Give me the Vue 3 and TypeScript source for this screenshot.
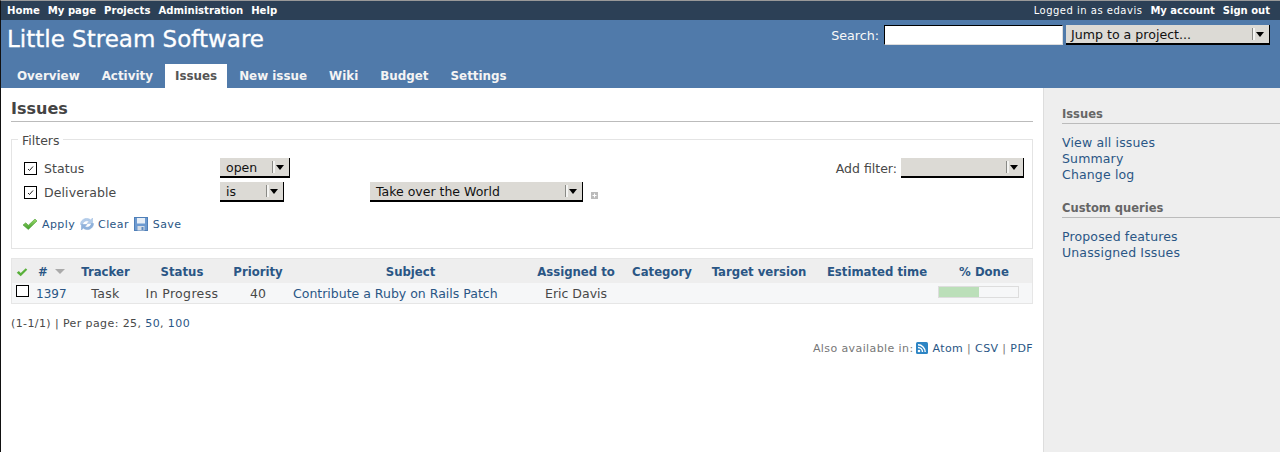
<script setup lang="ts">
const topLinks: string[] = ['Home', 'My page', 'Projects', 'Administration', 'Help']
const tabs: string[] = ['Overview', 'Activity', 'Issues', 'New issue', 'Wiki', 'Budget', 'Settings']
const columns: { label: string; cls: string }[] = [
  { label: 'Tracker', cls: 'c-tracker' },
  { label: 'Status', cls: 'c-status' },
  { label: 'Priority', cls: 'c-priority' },
  { label: 'Subject', cls: 'c-subject-h' },
  { label: 'Assigned to', cls: 'c-assigned' },
  { label: 'Category', cls: 'c-category' },
  { label: 'Target version', cls: 'c-target' },
  { label: 'Estimated time', cls: 'c-estimated' },
  { label: '% Done', cls: 'c-done-h' },
]
</script>

<template>
  <div class="page">
    <div class="top-menu">
      <nav class="top-left"><a v-for="l in topLinks" :key="l">{{ l }}</a></nav>
      <div class="top-right"><span class="logged">Logged in as edavis</span><a>My account</a><a>Sign out</a></div>
    </div>
    <header class="header">
      <div class="title-row">
        <h1>Little Stream Software</h1>
        <div class="quick">
          <label>Search:</label>
          <input class="search" type="text" />
          <div class="sel sel-jump"><span>Jump to a project...</span><i class="arrow"></i></div>
        </div>
      </div>
      <nav class="tabs">
        <a v-for="t in tabs" :key="t" :class="{ active: t === 'Issues' }">{{ t }}</a>
      </nav>
    </header>
    <div class="main">
      <div class="content">
        <h2>Issues</h2>
        <fieldset class="filters">
          <legend>Filters</legend>
          <div class="filter-body">
            <div class="filter-rows">
              <div class="frow">
                <span class="cb checked"><svg viewBox="0 0 9 9" width="9" height="9"><path d="M2 5 L3.500 6.500 L7 2.500" fill="none" stroke="#222" stroke-width="1"/></svg></span>
                <span class="flabel">Status</span>
                <div class="sel sel-open"><span>open</span><i class="arrow"></i></div>
              </div>
              <div class="frow">
                <span class="cb checked"><svg viewBox="0 0 9 9" width="9" height="9"><path d="M2 5 L3.500 6.500 L7 2.500" fill="none" stroke="#222" stroke-width="1"/></svg></span>
                <span class="flabel">Deliverable</span>
                <div class="sel sel-is"><span>is</span><i class="arrow"></i></div>
                <div class="sel sel-take"><span>Take over the World</span><i class="arrow"></i></div>
                <svg class="plus" width="7" height="7" viewBox="0 0 7 7"><rect width="7" height="7" fill="#bbb"/><path d="M3.500 1.500V5.500M1.500 3.500H5.500" stroke="#fff"/></svg>
              </div>
            </div>
            <div class="add-filter">
              <span>Add filter:</span>
              <div class="sel sel-add"><span></span><i class="arrow"></i></div>
            </div>
          </div>
          <div class="actions">
            <a class="act-apply">
              <svg width="16" height="16" viewBox="0 0 16 16">
                <defs><linearGradient id="gr" x1="0" y1="0" x2="0" y2="1"><stop offset="0" stop-color="#9bdc6a"/><stop offset="1" stop-color="#3f9c2a"/></linearGradient></defs>
                <path d="M1 9 L3.800 6.800 L6.300 9.300 L13 3 L15 5 L6.300 13.500 Z" fill="url(#gr)" stroke="#4f9e3a" stroke-width=".6"/>
              </svg>
              Apply</a>
            <a class="act-clear">
              <svg width="16" height="16" viewBox="0 0 16 16">
                <path d="M1.500 8.500C1.500 4.500 5 2 8.500 2.500c1.500.2 2.500.8 3.200 1.500L13.500 2v5.500H8l2-2C8 4 4.500 5 3.500 8.500z" fill="#b4cdea" stroke="#9dbbe0" stroke-width=".5"/>
                <path d="M14.500 7.500c0 4-3.500 6.500-7 6-1.500-.2-2.500-.8-3.200-1.500L2.500 14V8.500H8l-2 2c2 1.500 5.500.5 6.500-3z" fill="#8fb2dc" stroke="#7fa5d3" stroke-width=".5"/>
              </svg>
              Clear</a>
            <a class="act-save">
              <svg width="14" height="14" viewBox="0 0 14 14"><rect x="0.500" y="0.500" width="13" height="13" fill="#6d9ad0" stroke="#4f7fb8"/><rect x="3" y="1" width="8" height="5.500" fill="#e8eff7"/><rect x="3.500" y="9" width="7" height="4.500" fill="#d4dce6"/><rect x="7.500" y="10" width="2" height="3" fill="#5f89bd"/></svg>
              Save</a>
          </div>
        </fieldset>
        <div class="table">
          <div class="thead">
            <span class="c-check"><svg width="12" height="12" viewBox="0 0 16 16"><path d="M1 9 L3.800 6.800 L6.300 9.300 L13 3 L15 5 L6.300 13.500 Z" fill="#58b03a"/></svg></span>
            <span class="c-id"># <i class="sort"></i></span>
            <span v-for="c in columns" :key="c.label" :class="c.cls">{{ c.label }}</span>
          </div>
          <div class="tbody">
            <span class="c-check"><span class="cb row-cb"></span></span>
            <span class="c-id"><a>1397</a></span>
            <span class="c-tracker spaced">Task</span>
            <span class="c-status spaced">In Progress</span>
            <span class="c-priority">40</span>
            <span class="c-subject"><a>Contribute a Ruby on Rails Patch</a></span>
            <span class="c-assigned">Eric Davis</span>
            <span class="c-category"></span>
            <span class="c-target"></span>
            <span class="c-estimated"></span>
            <span class="c-done"><span class="progress"><span class="bar" :style="{ width: '50%' }"></span></span></span>
          </div>
        </div>
        <p class="pagination">(1-1/1) | Per page: 25, <a>50</a>, <a>100</a></p>
        <p class="other">Also available in:
          <svg width="12" height="12" viewBox="0 0 12 12"><rect width="12" height="12" rx="1.500" fill="#2d85c4"/><circle cx="3" cy="9" r="1.300" fill="#fff"/><path d="M2 5.500a4.500 4.500 0 0 1 4.500 4.500M2 2.800a7.200 7.200 0 0 1 7.200 7.200" fill="none" stroke="#fff" stroke-width="1.400"/></svg>
          <a>Atom</a> | <a>CSV</a> | <a>PDF</a></p>
      </div>
      <aside class="sidebar">
        <h3>Issues</h3>
        <a>View all issues</a>
        <a>Summary</a>
        <a>Change log</a>
        <h3 class="second">Custom queries</h3>
        <a>Proposed features</a>
        <a>Unassigned Issues</a>
      </aside>
    </div>
  </div>
</template>

<style>
html, body { margin: 0; background: #fff; }
</style>

<style scoped>
* { box-sizing: border-box; }
.page {
  height: 452px; overflow: hidden; display: flex; flex-direction: column;
  border-left: 1px solid #111; border-top: 1px solid #999;
  font-family: "DejaVu Sans", sans-serif; font-size: 12px; color: #484848;
}
a { color: #2a5685; text-decoration: none; }
.top-menu {
  height: 19px; background: #2c4056; color: #fff; display: flex; justify-content: space-between;
  align-items: center; font-size: 10.100px; padding: 0 10px 1px 6px;
}
.top-menu a { color: #fff; font-weight: bold; }
.top-left { display: flex; gap: 8px; }
.top-right { display: flex; gap: 8px; font-size: 10px; }
.logged { letter-spacing: .5px; }
.header { background: #507aaa; height: 68px; display: flex; flex-direction: column; justify-content: space-between; }
.title-row { display: flex; justify-content: space-between; padding: 4px 10px 0 6px; }
h1 { margin: 0; font-size: 23px; font-weight: normal; color: #fff; line-height: 30px; -webkit-text-stroke: .3px #fff; }
.quick { display: flex; align-items: center; height: 22px; color: #f8f8f8; font-size: 12.700px; }
.quick label { margin-right: 5px; }
.search { width: 179px; height: 20px; background: #fff; border: 1px solid; border-color: #000 #ddd #ddd #000; padding: 0; margin: 0 3px 0 0; }
.sel {
  position: relative; display: flex; align-items: center; background: #dcdad5; color: #111;
  border-style: solid; border-color: #000; border-width: 0 1px 2px 0; font-size: 12.500px; padding-left: 6px;
  flex: none;
}
.arrow { position: absolute; right: 0; top: 0; bottom: 0; width: 17px; }
.arrow::after { content: ""; position: absolute; left: 0; top: 3px; bottom: 3px; width: 2px; border-left: 1px solid #8a8a86; background: #f4f4f2; }
.arrow::before { content: ""; position: absolute; left: 4px; top: 7px; border: 4.500px solid transparent; border-top: 5px solid #000; border-bottom: 0; }
.sel-jump { width: 204px; height: 20px; font-size: 12.600px; padding-left: 5px; }
.sel-open { width: 70px; height: 20px; }
.sel-is { width: 64px; height: 20px; }
.sel-take { width: 213px; height: 20px; margin-left: 86px; }
.sel-add { width: 123px; height: 20px; }
.tabs { display: flex; padding-left: 6px; height: 24px; gap: 2px; }
.tabs a { color: #f4f4f4; font-weight: bold; font-size: 11.900px; line-height: 25px; padding: 0 10px; }
.tabs a.active { background: #fff; color: #555; }
.main { flex: 1; display: flex; min-height: 0; }
.content { width: 1042px; padding: 10px 10px 0 10px; flex: none; }
h2 { margin: 0; font-size: 16px; line-height: 22px; color: #444; font-weight: bold; border-bottom: 1px solid #bbb; padding-bottom: 1px; height: 24px; }
.filters { margin: 10px 0 0; border: 1px solid #e4e4e4; padding: 0; height: 117px; }
.filters legend { font-size: 12.500px; margin-left: 6px; padding: 0 4px; color: #484848; line-height: 14px; position: relative; top: 2px; }
.filter-body { display: flex; justify-content: space-between; padding: 12px 8px 0 12px; }
.frow { display: flex; align-items: center; height: 20px; margin-bottom: 4px; font-size: 12.500px; }
.cb { width: 13px; height: 13px; border: 1px solid #000; display: inline-flex; align-items: center; justify-content: center; background: #fff; flex: none; }
.flabel { width: 176px; margin-left: 7px; letter-spacing: .1px; }
.plus { margin-left: 8px; margin-top: 7px; }
.add-filter { display: flex; align-items: center; height: 20px; gap: 4px; font-size: 12.500px; }
.actions { display: flex; margin-top: 10px; padding-left: 10px; font-size: 11px; letter-spacing: .4px; }
.actions a { display: flex; align-items: center; }
.act-apply { gap: 4px; margin-right: 4px; }
.act-clear { gap: 3px; margin-right: 5px; }
.act-save { gap: 5px; }
.table { margin-top: 9px; border: 1px solid #e6e6e6; }
.thead, .tbody { display: flex; align-items: center; }
.thead { height: 24px; padding-top: 1px; background: #eee; font-weight: bold; color: #2a5685; font-size: 11.700px; text-align: center; }
.tbody { height: 20px; background: #f6f7f8; font-size: 12.500px; text-align: center; }
.spaced { letter-spacing: .35px; }
.c-check { width: 19px; flex: none; display: flex; justify-content: center; padding-left: 1px; }
.c-id { width: 39px; flex: none; display: flex; gap: 4px; align-items: center; padding-left: 5px; }
.tbody .c-id { font-size: 12px; padding-top: 1px; }
.thead .c-id { padding-left: 7px; }
.sort { display: inline-block; border: 5px solid transparent; border-top: 5px solid #aaa; border-bottom: 0; margin-left: 3px; }
.row-cb { width: 13px; height: 12px; margin-top: -4px; }
.c-tracker { width: 71px; flex: none; }
.c-status { width: 82px; flex: none; }
.c-priority { width: 70px; flex: none; }
.c-subject-h { width: 235px; flex: none; }
.c-subject { width: 235px; flex: none; text-align: left; }
.c-assigned { width: 96px; flex: none; }
.c-category { width: 76px; flex: none; }
.c-target { width: 118px; flex: none; }
.c-estimated { width: 118px; flex: none; }
.c-done-h { width: 96px; flex: none; }
.c-done { width: 96px; flex: none; display: flex; padding-left: 2px; }
.progress { display: block; width: 81px; height: 12px; margin-top: -3px; border: 1px solid #ddd; background: #f6f7f8; }
.bar { display: block; height: 100%; background: #bbdfb9; }
.pagination { margin: 13px 0 0; font-size: 11px; letter-spacing: .4px; }
.other { margin: 12px 0 0; text-align: right; font-size: 11px; letter-spacing: .4px; color: #777; }
.other svg { vertical-align: -2px; margin: 0 4px 0 -1px; }
.sidebar { flex: 1; background: #eee; border-left: 1px solid #ddd; padding: 18px 0 0 18px; display: flex; flex-direction: column; }
.sidebar h3 { margin: 0 0 11px; font-size: 11.500px; line-height: 16px; color: #666; font-weight: bold; border-bottom: 1px solid #bbb; padding-bottom: 1px; height: 18px; }
.sidebar h3.second { margin-top: 17px; }
.sidebar a { font-size: 12.500px; line-height: 16px; letter-spacing: .15px; }
</style>
